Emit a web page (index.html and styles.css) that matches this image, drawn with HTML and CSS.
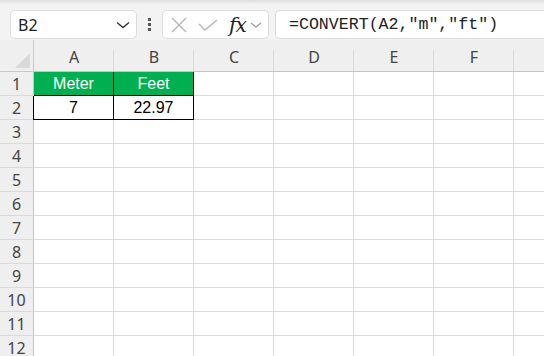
FILE: index.html
```html
<!DOCTYPE html>
<html>
<head>
<meta charset="utf-8">
<link rel="stylesheet" href="styles.css">
</head>
<body>
<div class="app">
  <div class="toolbar">
    <div class="namebox">
      <span class="name">B2</span>
      <svg class="chev" width="14" height="8" viewBox="0 0 14 8"><path d="M1 1.5 L7 6.5 L13 1.5" fill="none" stroke="#333" stroke-width="1.4"/></svg>
    </div>
    <div class="kebab"><i></i><i></i><i></i></div>
    <div class="fxbox">
      <svg class="x" width="16" height="16" viewBox="0 0 16 16"><path d="M1 1 L15 15 M15 1 L1 15" stroke="#b4b4b4" stroke-width="1.3" fill="none"/></svg>
      <svg class="check" width="20" height="12" viewBox="0 0 20 12"><path d="M1 5 L7 11 L19 1" stroke="#b4b4b4" stroke-width="1.3" fill="none"/></svg>
      <span class="fx">fx</span>
      <svg class="chev2" width="12" height="6" viewBox="0 0 12 6"><path d="M1 1 L6 5 L11 1" fill="none" stroke="#999" stroke-width="1.2"/></svg>
    </div>
    <div class="formula">=CONVERT(A2,"m","ft")</div>
  </div>
  <div class="grid">
    <div class="corner"><span class="tri"></span></div>
    <div class="ch">A</div><div class="ch">B</div><div class="ch">C</div><div class="ch">D</div><div class="ch">E</div><div class="ch">F</div><div class="ch last"></div>

    <div class="rh">1</div>
    <div class="c hd bl">Meter</div><div class="c hd br">Feet</div><div class="c"></div><div class="c"></div><div class="c"></div><div class="c"></div><div class="c"></div>

    <div class="rh">2</div>
    <div class="c dt bl">7</div><div class="c dt br">22.97</div><div class="c"></div><div class="c"></div><div class="c"></div><div class="c"></div><div class="c"></div>

    <div class="rh">3</div><div class="c"></div><div class="c"></div><div class="c"></div><div class="c"></div><div class="c"></div><div class="c"></div><div class="c"></div>
    <div class="rh">4</div><div class="c"></div><div class="c"></div><div class="c"></div><div class="c"></div><div class="c"></div><div class="c"></div><div class="c"></div>
    <div class="rh">5</div><div class="c"></div><div class="c"></div><div class="c"></div><div class="c"></div><div class="c"></div><div class="c"></div><div class="c"></div>
    <div class="rh">6</div><div class="c"></div><div class="c"></div><div class="c"></div><div class="c"></div><div class="c"></div><div class="c"></div><div class="c"></div>
    <div class="rh">7</div><div class="c"></div><div class="c"></div><div class="c"></div><div class="c"></div><div class="c"></div><div class="c"></div><div class="c"></div>
    <div class="rh">8</div><div class="c"></div><div class="c"></div><div class="c"></div><div class="c"></div><div class="c"></div><div class="c"></div><div class="c"></div>
    <div class="rh">9</div><div class="c"></div><div class="c"></div><div class="c"></div><div class="c"></div><div class="c"></div><div class="c"></div><div class="c"></div>
    <div class="rh">10</div><div class="c"></div><div class="c"></div><div class="c"></div><div class="c"></div><div class="c"></div><div class="c"></div><div class="c"></div>
    <div class="rh">11</div><div class="c"></div><div class="c"></div><div class="c"></div><div class="c"></div><div class="c"></div><div class="c"></div><div class="c"></div>
    <div class="rh">12</div><div class="c"></div><div class="c"></div><div class="c"></div><div class="c"></div><div class="c"></div><div class="c"></div><div class="c"></div>
  </div>
</div>
</body>
</html>
```

FILE: styles.css
```css
* { box-sizing: border-box; }
html, body { margin: 0; padding: 0; }
body {
  width: 544px;
  height: 356px;
  overflow: hidden;
  background: #f3f3f3;
  font-family: "Liberation Sans", Arial, sans-serif;
}
.app { width: 544px; height: 356px; overflow: hidden; }

.toolbar {
  height: 40px;
  display: flex;
  align-items: flex-start;
  padding: 10px 0 0 10px;
  background: linear-gradient(#dedede 0, #ebebeb 3px, #f3f3f3 4px, #f3f3f3 100%);
  white-space: nowrap;
}
.namebox {
  width: 127px;
  height: 29px;
  background: #fff;
  border: 1px solid #dcdcdc;
  border-radius: 5px;
  display: flex;
  align-items: center;
  padding: 0 0 0 7px;
  flex: none;
}
.name { font-family: "Noto Sans", "Liberation Sans", sans-serif; font-size: 16px; color: #222; flex: 1; }
.chev { margin-right: 6px; }
.kebab {
  width: 25px;
  height: 29px;
  display: flex;
  flex-direction: column;
  align-items: center;
  justify-content: center;
  gap: 2px;
  flex: none;
}
.kebab i { display: block; width: 3px; height: 3px; background: #555; }
.fxbox {
  width: 107px;
  height: 29px;
  background: #fff;
  border: 1px solid #dcdcdc;
  border-radius: 5px;
  display: flex;
  align-items: center;
  padding-left: 8px;
  flex: none;
}
.fxbox .x { margin-right: 11px; }
.fxbox .check { margin-right: 11px; }
.fx {
  font-family: "DejaVu Serif", "Liberation Serif", serif;
  font-style: italic;
  font-size: 20px;
  color: #222;
  letter-spacing: -1px;
}
.chev2 { margin-left: 4px; }
.formula {
  margin-left: 6px;
  flex: 1;
  height: 29px;
  background: #fff;
  border: 1px solid #dcdcdc;
  border-right: none;
  border-radius: 5px 0 0 5px;
  padding-left: 13px;
  font-family: "Liberation Mono", "DejaVu Sans Mono", monospace;
  font-size: 16.6px;
  line-height: 27px;
  color: #222;
}

.grid {
  display: grid;
  grid-template-columns: 34px repeat(7, 80px);
  grid-template-rows: 32px repeat(12, 24px);
  background: #fff;
}
.corner {
  background: #efefef;
  border-right: 1px solid #c8c8c8;
  border-bottom: 1px solid #c8c8c8;
  position: relative;
}
.tri {
  position: absolute;
  right: 3px;
  bottom: 3px;
  width: 0; height: 0;
  border-left: 15px solid transparent;
  border-bottom: 15px solid #d9d9d9;
}
.ch {
  background: #efefef;
  border-bottom: 1px solid #c4c4c4;
  display: flex;
  align-items: flex-end;
  justify-content: center;
  padding-bottom: 5px;
  font-family: "Noto Sans", "Liberation Sans", sans-serif;
  font-size: 16px;
  line-height: 17px;
  color: #444;
  background-image: linear-gradient(#dadada, #dadada);
  background-size: 1px 21px;
  background-position: right bottom;
  background-repeat: no-repeat;
}
.rh {
  background: #efefef;
  border-right: 1px solid #c4c4c4;
  border-bottom: 1px solid #dadada;
  display: flex;
  align-items: center;
  justify-content: center;
  font-family: "Noto Sans", "Liberation Sans", sans-serif;
  font-size: 16px;
  color: #444;
}
.c {
  border-right: 1px solid #dadada;
  border-bottom: 1px solid #dadada;
  display: flex;
  align-items: center;
  justify-content: center;
  font-size: 16px;
  color: #000;
}
.c.hd { background: #00b050; color: #fff; border-bottom-color: #000; border-right-color: #000; }
.c.dt { border-bottom-color: #000; border-right-color: #000; }
.c.dt.bl { box-shadow: -1px 0 0 #000; }
```
